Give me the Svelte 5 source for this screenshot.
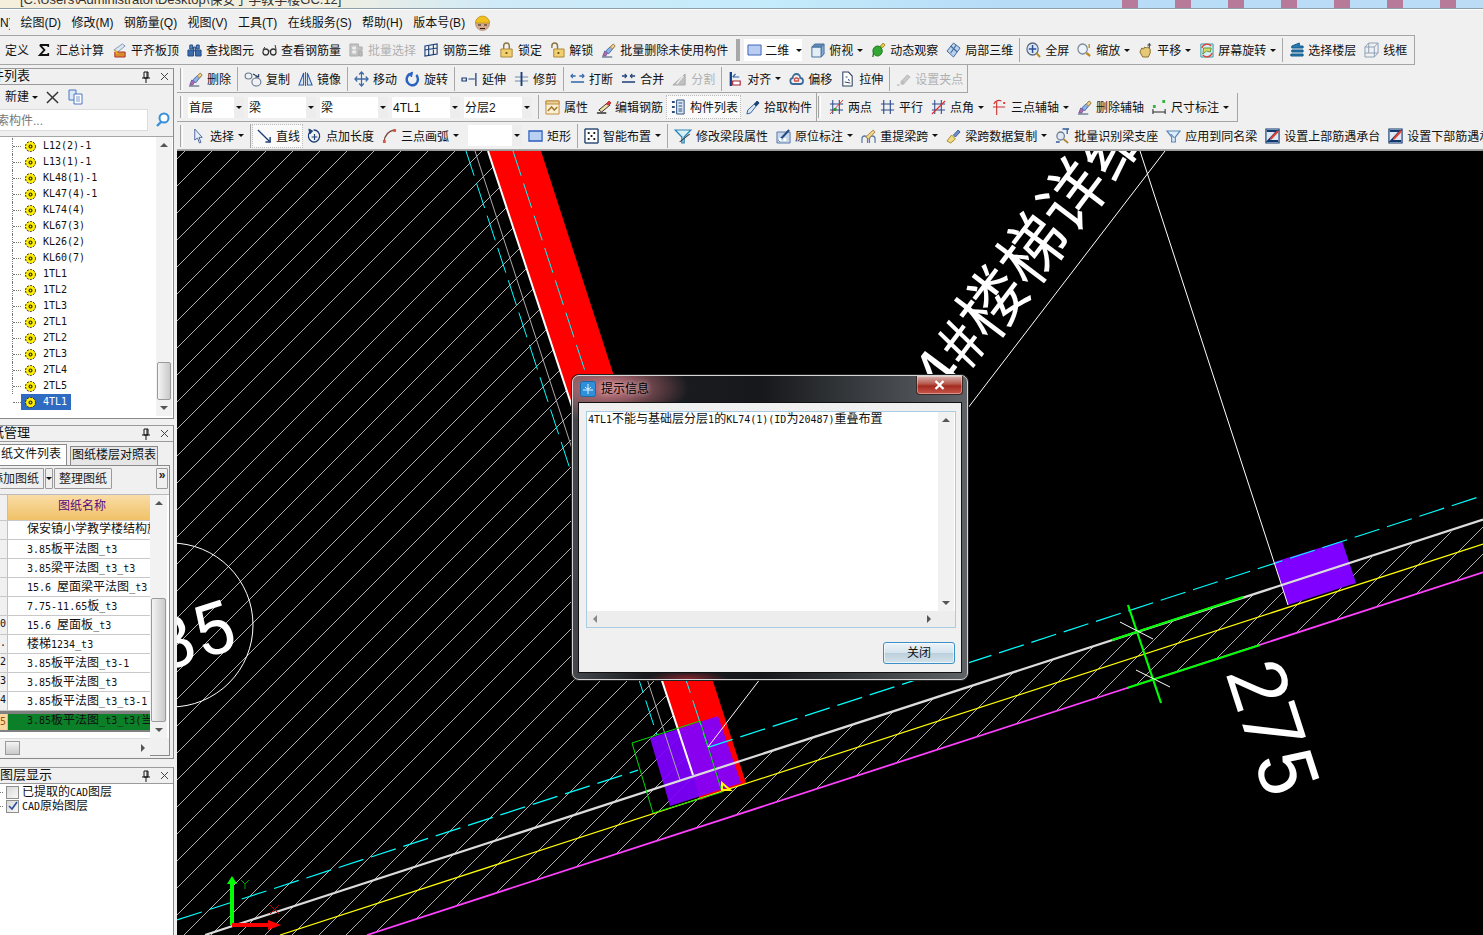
<script>
  const c = (x, y, r) => `M${x - r} ${y}a${r} ${r} 0 1 0 ${2 * r} 0a${r} ${r} 0 1 0 ${-2 * r} 0z`;

  // each icon is a list of [path, stroke, fill, stroke width]
  const icons = {
    sum: [['M3 3h9v2M3 3l5 5-5 5h9v-2', '#111', 'none', 1.8]],
    plate: [['M2 8l9-6 3 2-8 6z', '#7e98b8', '#dfe7f0'], ['M3 10h11v5H3z', '#a33', '#d98a2b'], ['M3 8l3 4', '#e8b020', 'none', 2]],
    binoc: [['M3 3h3v4H3zM10 3h3v4h-3z', '#234a80', '#5b84c4'], ['M1 8h6v6H1zM9 8h6v6H9z', '#234a80', '#3c6bad'], ['M7 5h2v4H7z', '#234a80', '#9db8dc']],
    glasses: [[c(4, 10, 3), '#333', 'none', 1.3], [c(12, 10, 3), '#333', 'none', 1.3], ['M7 9h2M1 8l2-3M15 8l-1-5', '#333', 'none', 1]],
    batchsel: [['M1 2h9v3h4v3h-4v6H1z', '#aaa', '#c4c4c4'], ['M4 5h3v2H4zM4 9h3v2H4z', '#eee', '#eee'], ['M11 9h3v5h-3z', '#aaa', '#bbb']],
    rebar3d: [['M1 4l13-2v10L1 14zM5 3v11M10 3v10M1 8l13-2', '#1c3f78', 'none', 1.2]],
    lock: [['M5 7V4a3 3 0 0 1 6 0v3', '#8a7540', 'none', 1.5], ['M2 7h12v8H2z', '#a9873a', '#f2cf6e'], ['M8 10v2', '#6b5520', 'none', 2]],
    unlock: [['M2 6V4a3 3 0 0 1 6 0v3', '#8a7540', 'none', 1.5], ['M4 7h11v8H4z', '#a9873a', '#f2cf6e'], ['M9 10v2', '#6b5520', 'none', 2]],
    erase: [['M1 15h11', '#344a6a', 'none', 1], ['M2 14l2-5 3 2-2 3z', '#7a5a9a', '#b06cb0'], ['M5 9l8-7 2 2-7 8z', '#4a70b0', '#8fb0e0'], ['M10 5l3-3 2 2-3 3z', '#b08a40', '#f0d48a']],
    rect2d: [['M1 3h14v10H1z', '#3a62b8', '#b9cdf2']],
    cube: [['M2 5h10v10H2z', '#45709c', '#e2edf6'], ['M2 5l3-3h10l-3 3z', '#45709c', '#5e8cb8'], ['M12 5l3-3v10l-3 3z', '#45709c', '#86acd0']],
    orbit: [['M2 15c0-5 4-9 10-11', '#1d6b1d', 'none', 1.4], [c(7, 9, 5), '#1c7a1c', '#34a634'], ['M10 4l3-3 2 2-3 3z', '#9a8a20', '#e3cf4a']],
    part3d: [['M8 1l7 5-7 9-7-6z', '#3d6aa0', '#bcd2ea'], ['M5 4l7 6M11 3L5 11', '#3d6aa0', 'none', 1.2]],
    full: [[c(7, 7, 6), '#5a6a80', '#dfe9f5', 1.3], ['M7 3v8M3 7h8', '#2b4f98', 'none', 1.6], ['M11 11l4 4', '#b88a20', 'none', 2]],
    zoom: [[c(6, 7, 5), '#7a8a9a', '#eef3f8', 1.3], ['M10 11l4 3', '#b88a20', 'none', 2.2], ['M13 2v4', '#b88a20', 'none', 1.4]],
    pan: [['M2 10l2-4 2 1 1-2 2 1 1-1 3 2v4l-2 4H5z', '#8a7030', '#e5c878'], ['M12 1v5M10 3h4', '#333', 'none', 1]],
    screen: [['M2 2h13v13H2z', '#39a', '#d6eef7'], ['M4 12l4-3 4 1 1-4H5z', '#5a9a3a', '#e2d66a'], ['M3 6a6 6 0 0 1 10-2M14 11a6 6 0 0 1-10 2', '#d43', 'none', 1.4]],
    floor: [['M3 4l8-3v3h4v2H3zM3 8h12v2H3zM2 12h13v2H2z', '#0e5a8a', '#2a7ab0']],
    wire: [['M1 5h10v10H1zM1 5l4-4h10v10l-4 4M11 5l4-4M5 1v10H1M5 11h10', '#8aa0b8', 'none', 1]],
    copy: [[c(4, 5, 3), '#6a7a8a', '#eef2f6'], [c(11, 11, 4), '#6a7a8a', '#eef2f6'], ['M8 3l5 3M13 3v3h-3', '#2a3a60', 'none', 1]],
    mirror: [['M6 2v12H1zM10 2v12h5z', '#2c5fa8', '#d8e6f6', 1.1], ['M8 1v14', '#2c5fa8', 'none', 1]],
    move: [['M8 1v14M1 8h14M5.5 3.5L8 1l2.5 2.5M5.5 12.5L8 15l2.5-2.5M3.5 5.5L1 8l2.5 2.5M12.5 5.5L15 8l-2.5 2.5', '#3c6aa6', 'none', 1.3]],
    rotate: [['M5 3a6 6 0 1 0 7 1', '#2a62c0', 'none', 2.6], ['M8 1L4 3l3 3z', '#2a62c0', '#2a62c0']],
    extend: [['M1 7h4v3H1zM14 2v13M7 8h6', '#1c3f78', 'none', 1.2]],
    trim: [['M1 6h14M1 10h14', '#7088a8', 'none', 1.1], ['M8 1v14', '#1c3f78', 'none', 2]],
    brk: [['M1 5h5M10 5h5M1 11h14', '#2e66a8', 'none', 1.4], ['M3 3L1 5l2 2M13 3l2 2-2 2', '#2e66a8', 'none', 1.1]],
    merge: [['M1 5h5M10 5h5M1 11h14', '#1c3f78', 'none', 1.4], ['M4 3l2 2-2 2M12 3l-2 2 2 2', '#1c3f78', 'none', 1.1]],
    split: [['M1 14L14 3v11z', '#aaa', '#c0c0c0'], ['M5 13l7-8', '#eee', 'none', 1.4]],
    align: [['M3 1v14', '#123a80', 'none', 2.4], ['M5 6h7M5 6l3-3', '#2a5ea8', 'none', 1.2], ['M5 10h8v4H5z', '#a02030', '#fff', 1.2]],
    offset: [['M5 13a3 3 0 0 1-1-6 4 4 0 0 1 8 0 3 3 0 0 1 0 6z', '#3a6a9a', 'none', 1.8], ['M6 10a2 2 0 0 1 0-2 2.5 2.5 0 0 1 4 0 2 2 0 0 1 0 2z', '#d0504a', 'none', 1.4]],
    stretch: [['M3 1h6l4 4v10H3z', '#2a3f60', '#fff', 1.1], ['M6 6h2M9 8l1 2M5 11l6 1', '#2a3f60', 'none', 1]],
    grip: [['M1 14h3', '#aaa', 'none', 1], ['M6 10l6-6 3 2-6 6z', '#b8b8b8', '#c8c8c8'], ['M5 12l1-2 3 2-2 2z', '#bbb', '#bbb']],
    prop: [['M1 2h14v13H1z', '#c08a30', '#faf0d8'], ['M1 2h14v3H1z', '#c08a30', '#e8d0a0'], ['M3 12l4-4 3 3 3-3', '#a27a2a', 'none', 1.6]],
    edit: [['M1 14h10', '#222', 'none', 1.4], ['M3 11l9-7 3 2-9 7z', '#333', '#f0e0a8', 1], ['M11 5l3-3 2 2-3 2z', '#b33', '#d34']],
    list: [['M1 2h3v2H1zM1 7h3v2H1zM1 12h3v2H1z', 'none', '#2b4f7c'], ['M6 1h8v14H6z', '#2b4f7c', '#dbe6f4', 1], ['M8 4h4M8 7h4M8 10h4M8 12h4', '#2b4f7c', 'none', 1]],
    pick: [['M2 15l1-4 7-6 2 2-6 7z', '#3b5f92', '#dbe8f8'], ['M10 5l3-3 2 2-3 3z', '#1c3f78', '#1c3f78']],
    two: [['M4 1v14M11 1v14M1 5h14M1 11h14', '#2a4a8a', 'none', 1.1], ['M1 15L15 1', '#d33', 'none', 1], ['M5 9h3v3H5z', 'none', '#2e9a2e']],
    par: [['M4 1v14M11 1v14M1 5h14M1 11h14', '#2a4a8a', 'none', 1.2]],
    ang: [['M4 1v14M11 1v14M1 5h14M1 11h14', '#2a4a8a', 'none', 1.1], ['M1 15L15 2', '#d33', 'none', 1.3]],
    three: [['M5 3v13M1 8h13', '#c33', 'none', 1.2], ['M2 5a6 6 0 0 1 8-3', '#c33', 'none', 1.2], ['M12 3h2v2h-2z', 'none', '#e33']],
    dim: [['M1 10v5M14 10v5M1 13h13', '#222', 'none', 1], ['M1 6h3v3H1zM11 1h3v3h-3z', 'none', '#3ab53a']],
    cursor: [['M4 1v11l3-2 2 5 1.6-.6-2-5h3.4z', '#4a68a0', '#e8eef8', 1]],
    line: [['M1 2l13 12', '#1c3f78', 'none', 1.5], ['M14 9v5H9', '#1c3f78', 'none', 1.5]],
    plen: [['M3 4a6 6 0 1 0 4-2', '#1c3f78', 'none', 1.4], ['M2 1l4 2-3 3z', '#1c3f78', '#1c3f78'], ['M8 6v6M5 9h6', '#1c3f78', 'none', 1.2]],
    arc: [['M2 14C3 7 7 3 13 2', '#7a4a3a', 'none', 1.3], ['M1 12h3v3H1zM12 1h3v3h-3z', 'none', '#d8584a']],
    rect: [['M1 3h14v10H1z', '#2a5cc0', '#b9d0f4', 1.3]],
    smart: [['M1 1h14v14H1z', '#333', '#fff', 1], ['M4 4h2v2H4zM10 4h2v2h-2zM7 7h2v2H7zM4 10h2v2H4zM10 10h2v2h-2z', 'none', '#222'], ['M1 1h14v14H1z', '#2a5a9a', 'none', 1]],
    filter: [['M1 2h14L9 9v6H7V9z', '#2a86b8', '#d8f0f8', 1.2], ['M5 14l9-8', '#333', 'none', 1]],
    inplace: [['M1 4h14v11H1z', '#5878a8', '#c8d8ec'], ['M3 13l9-9 2-2', '#274a80', 'none', 2.2], ['M3 10h3v3H3zM8 10h3v3H8z', 'none', '#fff']],
    respan: [['M1 15v-4a3 3 0 0 1 6 0v4M9 15v-4a3 3 0 0 1 6 0v4', '#5a7aa8', 'none', 1.3], ['M5 9l8-7 2 2-7 7z', '#a88a4a', '#f0d48a']],
    broom: [['M1 13l5-6 4 4-5 4z', '#a88a30', '#f0dc80'], ['M8 7l5-5 2 2-5 5z', '#3a5a90', '#7090c8']],
    batch: [[c(6, 8, 4), '#6a7a90', '#dfe8f2', 1.3], ['M9 11l5 4', '#b08a30', 'none', 2], ['M8 1h7M13 1v5M1 14h4', '#2a5a9a', 'none', 1.3]],
    same: [['M1 3h14L10 9v5H6V9z', '#5a86b8', '#dcecf8', 1.2], ['M5 6l4 4', '#2a5a9a', 'none', 1]],
    seat: [['M1 1h14v14H1z', '#12386e', '#dfe9f6', 1.2], ['M2 3h11L3 13h11', '#12386e', 'none', 1.8], ['M6 11l8-8', '#e04030', 'none', 2.2]]
  };

  const it = (t, i, o = {}) => ({ t, i, ...o });
  const sep = { sep: true };

  const row1 = [
    it('定义'), it('汇总计算', 'sum'), it('平齐板顶', 'plate'), it('查找图元', 'binoc'), it('查看钢筋量', 'glasses'),
    it('批量选择', 'batchsel', { off: true }), it('钢筋三维', 'rebar3d'), it('锁定', 'lock'), it('解锁', 'unlock'),
    it('批量删除未使用构件', 'erase'), { sep: true, grip: true },
    { combo2d: true }, it('俯视', 'cube', { arrow: true }), it('动态观察', 'orbit'), it('局部三维', 'part3d'), sep,
    it('全屏', 'full'), it('缩放', 'zoom', { arrow: true }), it('平移', 'pan', { arrow: true }), it('屏幕旋转', 'screen', { arrow: true }), sep,
    it('选择楼层', 'floor'), it('线框', 'wire')
  ];
  const row2 = [
    it('删除', 'erase'), sep, it('复制', 'copy', { w: 18 }), it('镜像', 'mirror'), sep, it('移动', 'move'), it('旋转', 'rotate'), sep,
    it('延伸', 'extend', { w: 17 }), it('修剪', 'trim'), sep, it('打断', 'brk'), it('合并', 'merge'), it('分割', 'split', { off: true }), sep,
    it('对齐', 'align', { arrow: true }), it('偏移', 'offset'), it('拉伸', 'stretch'), sep, it('设置夹点', 'grip', { off: true })
  ];
  const combos = [['首层', 46], ['梁', 58], ['梁', 58], ['4TL1', 58], ['分层2', 58]];
  const row3a = [it('属性', 'prop'), it('编辑钢筋', 'edit'), it('构件列表', 'list', { on: true }), it('拾取构件', 'pick')];
  const row3b = [
    it('两点', 'two'), it('平行', 'par'), it('点角', 'ang', { arrow: true }), it('三点辅轴', 'three', { arrow: true }),
    it('删除辅轴', 'erase'), it('尺寸标注', 'dim', { arrow: true })
  ];
  const row4a = [it('选择', 'cursor', { arrow: true }), sep, it('直线', 'line', { on: true }), it('点加长度', 'plen'), it('三点画弧', 'arc', { arrow: true })];
  const row4b = [
    it('矩形', 'rect'), sep, it('智能布置', 'smart', { arrow: true }), sep, it('修改梁段属性', 'filter', { w: 18 }),
    it('原位标注', 'inplace', { arrow: true }), it('重提梁跨', 'respan', { arrow: true }), it('梁跨数据复制', 'broom', { arrow: true }),
    it('批量识别梁支座', 'batch'), it('应用到同名梁', 'same'), it('设置上部筋遇承台', 'seat'), it('设置下部筋遇承台', 'seat')
  ];

  const menus = ['绘图(D)', '修改(M)', '钢筋量(Q)', '视图(V)', '工具(T)', '在线服务(S)', '帮助(H)', '版本号(B)'];
  const tree = ['L12(2)-1', 'L13(1)-1', 'KL48(1)-1', 'KL47(4)-1', 'KL74(4)', 'KL67(3)', 'KL26(2)', 'KL60(7)',
    '1TL1', '1TL2', '1TL3', '2TL1', '2TL2', '2TL3', '2TL4', '2TL5', '4TL1'];
  const drawings = [
    ['', '保安镇小学教学楼结构施工图'], ['', '3.85板平法图_t3'], ['', '3.85梁平法图_t3_t3'], ['', '15.6 屋面梁平法图_t3'],
    ['', '7.75-11.65板_t3'], ['0', '15.6 屋面板_t3'], ['.', '楼梯1234_t3'], ['2', '3.85板平法图_t3-1'],
    ['3', '3.85板平法图_t3'], ['4', '3.85板平法图_t3_t3-1'], ['5', '3.85板平法图_t3_t3(当前)']
  ];

  const runs = (s) => s.split(/([\x00-\x7f]+)/).filter(Boolean).map((p) => ({ s: p, lat: /^[\x00-\x7f]/.test(p) }));

  // hatch lines of the floor slab, x + y stays constant along one line
  const hatch = [];
  for (let k = 330 + 6; k < 2500; k += 27) hatch.push(k);

  const beamY = (x, x0, y0) => y0 - 0.325 * (x - x0);
</script>

{#snippet mix(s)}{#each runs(s) as r}<span class:lat={r.lat}>{r.s}</span>{/each}{/snippet}

{#snippet icon(name, w = 15)}
  <svg class="ic" width={w} height="16" viewBox="0 0 16 16" preserveAspectRatio="none">
    {#each icons[name] as p}
      <path d={p[0]} stroke={p[1]} fill={p[2]} stroke-width={p[3] ?? 1} />
    {/each}
  </svg>
{/snippet}

{#snippet gear()}
  <svg class="gear" width="13" height="13" viewBox="0 0 13 13">
    <circle cx="6.5" cy="6.5" r="5" fill="#ffee00" stroke="#222" stroke-width="1" stroke-dasharray="2 1.2" />
    <circle cx="6.5" cy="6.5" r="2" fill="#222" />
    <circle cx="6.5" cy="6.5" r="0.9" fill="#ffee00" />
  </svg>
{/snippet}

{#snippet tools(items)}
  {#each items as x}
    {#if x.combo2d}
      <span class="combo2d">{@render icon('rect2d')}<b>二维</b><i class="arr"></i></span>
    {:else if x.sep}
      <span class="sep" class:grip={x.grip}></span>
    {:else}
      <span class="ti" class:off={x.off} class:on={x.on}>
        {#if x.i}{@render icon(x.i, x.w)}{/if}
        <span class="lbl">{x.t}</span>
        {#if x.arrow}<i class="arr"></i>{/if}
      </span>
    {/if}
  {/each}
{/snippet}

{#snippet vbar(cls, h)}
  <div class="vbar {cls}">
    <i class="tri up"></i>
    <div class="track"><div class="thumb" style="height:{h}px"></div></div>
    <i class="tri down"></i>
  </div>
{/snippet}

{#snippet phead(title, indent)}
  <div class="phead">
    <span class="ptitle" style="margin-left:{indent}px">{title}</span>
    <svg width="10" height="12" viewBox="0 0 10 12" class="pin"><path d="M3 1h4v6H3zM1 7h8M5 7v5M6 1v6" stroke="#111" fill="none" /></svg>
    <svg width="9" height="9" viewBox="0 0 9 9" class="cls"><path d="M1 1l7 7M8 1L1 8" stroke="#444" fill="none" /></svg>
  </div>
{/snippet}

<div class="app">
  <div class="titlebar"><span>[C:\Users\Administrator\Desktop\保安子学教学楼GC.12]</span></div>

  <div class="menubar">
    <span class="cutoff">N)</span>
    {#each menus as m}<span>{m}</span>{/each}
    <svg class="helmet" width="17" height="17" viewBox="0 0 17 17">
      <path d={c(8.5, 9.5, 7)} fill="#d8a888" stroke="#8a6a50" stroke-width=".5" />
      <path d="M1.5 9a7 7 0 0 1 14 0z" fill="#f0c020" stroke="#b08a10" stroke-width=".6" />
      <path d="M4 11h3M10 11h3M6 14.500h5" stroke="#222" fill="none" />
    </svg>
  </div>

  <div class="bar1">{@render tools(row1)}</div>

  <div class="main">
    <aside class="left">
      <section class="pane p1">
        {@render phead('件列表', -9)}
        <div class="ptools">
          <span class="newbtn">新建</span><i class="arr"></i>
          <svg width="13" height="13" viewBox="0 0 14 14" class="xbtn"><path d="M1 1l12 12M13 1L1 13" stroke="#333" stroke-width="1.6" fill="none" /></svg>
          <svg width="16" height="16" viewBox="0 0 16 16"><path d="M1 1h7v10H1z" fill="#dbe8f8" stroke="#4a78c0" /><path d="M6 5h8v10H6z" fill="#fff" stroke="#4a78c0" /><path d="M8 8h4M8 10h4M8 12h4" stroke="#7a9ad0" fill="none" /></svg>
        </div>
        <div class="search">
          <span class="ph">索构件...</span>
          <svg width="16" height="16" viewBox="0 0 16 16"><path d={c(9, 6, 4.5)} fill="#fff" stroke="#3a90d8" stroke-width="2" /><path d="M6 10l-4 4" stroke="#3a90d8" stroke-width="2.4" /></svg>
        </div>
        <div class="treewrap">
          <div class="tree">
            {#each tree as n, i}
              <div class="node" class:last={i === tree.length - 1}>
                <span class="hook"></span>
                <span class="nlabel" class:sel={n === '4TL1'}>{@render gear()}<span class="lat">{n}</span></span>
              </div>
            {/each}
          </div>
          {@render vbar('tbar', 38)}
        </div>
      </section>

      <section class="pane p2">
        {@render phead('纸管理', -9)}
        <div class="tabs">
          <span class="tab act">纸文件列表</span>
          <span class="tab">图纸楼层对照表</span>
        </div>
        <div class="frame">
          <div class="dtools">
            <span class="bt first">添加图纸</span><span class="bt mini"><i class="arr"></i></span>
            <span class="bt">整理图纸</span>
            <span class="bt more">»</span>
          </div>
          <div class="grid">
            <div class="gcol">
              <div class="grow ghead"><span class="num"></span><span class="gname">图纸名称</span></div>
              {#each drawings as d, i}
                <div class="grow" class:cur={i === drawings.length - 1} class:firstrow={i === 0}>
                  <span class="num">{d[0]}</span>
                  <span class="name">{@render mix(d[1])}</span>
                </div>
              {/each}
            </div>
            {@render vbar('gbar', 124)}
          </div>
          <div class="hbar"><span class="hthumb"></span><i class="tri right"></i></div>
        </div>
      </section>

      <section class="pane p3">
        {@render phead('图层显示', 0)}
        <div class="layers">
          <label><u></u><i class="chk"></i><span>{@render mix('已提取的CAD图层')}</span></label>
          <label><u></u><i class="chk on"><svg width="10" height="10" viewBox="0 0 10 10"><path d="M1 5l3 3 5-7" stroke="#2a4f9a" stroke-width="1.6" fill="none" /></svg></i><span>{@render mix('CAD原始图层')}</span></label>
        </div>
      </section>
    </aside>

    <div class="work">
      <div class="bar2">
        <span class="gripper"></span>
        {@render tools(row2)}
      </div>
      <div class="bar3">
        <div class="seg seg-a">
          <span class="gripper"></span>
          {#each combos as cb}
            <span class="combo"><b style="width:{cb[1]}px">{cb[0]}</b><em><i class="arr"></i></em></span>
          {/each}
          <span class="sep"></span>
          {@render tools(row3a)}
        </div>
        <div class="seg seg-b">
          <span class="gripper"></span>
          {@render tools(row3b)}
        </div>
      </div>
      <div class="bar4">
        <span class="gripper"></span>
        {@render tools(row4a)}
        <span class="combo small"><b style="width:44px"></b><em><i class="arr"></i></em></span>
        {@render tools(row4b)}
      </div>

      <svg class="cad" viewBox="177 151 1306 784" width="1306" height="784">
        <defs>
          <clipPath id="slab">
            <path d="M177 151H488L693 775L1483 521.5V571.5L367 935H177z" />
          </clipPath>
        </defs>
        <rect x="177" y="151" width="1306" height="784" fill="#000" />

        <g clip-path="url(#slab)" stroke="#b0b0b0" stroke-width="1">
          {#each hatch as k}
            <line x1="177" y1={k - 177} x2="1483" y2={k - 1483} />
          {/each}
        </g>

        <!-- beam running up the sheet -->
        <path d="M488 151H541L746 783L700 800L693 775z" fill="#fe0000" />
        <path d="M650 738L718 716L741 783L670 806z" fill="#7f00ff" opacity=".93" />
        <path d="M1274 562L1342 541L1356 583L1288 605z" fill="#7f00ff" />

        <path d="M488 151L693 775" stroke="#fff" stroke-width="2" />
        <path d="M475 151L680 780" stroke="#aaa" stroke-width="1" />
        <path d="M466 151L657 735" stroke="#0ff" stroke-width="1" stroke-dasharray="26 8" />
        <path d="M513 151L708 747" stroke="#0ff" stroke-width="1" stroke-dasharray="26 8" />

        <!-- long beam -->
        <line x1="177" y1={beamY(177, 177, 920)} x2="638" y2={beamY(638, 177, 920)} stroke="#0ff" stroke-width="1.2" stroke-dasharray="26 8" />
        <line x1="708" y1={beamY(708, 177, 920)} x2="1483" y2={beamY(1483, 177, 920)} stroke="#0ff" stroke-width="1.2" stroke-dasharray="26 8" />
        <line x1="205" y1="935" x2="1483" y2={beamY(1483, 205, 935)} stroke="#dcdcdc" stroke-width="2.2" />
        <line x1="280" y1="935" x2="1483" y2={beamY(1483, 280, 935)} stroke="#ffff00" stroke-width="1.2" />
        <line x1="367" y1="935" x2="1483" y2={beamY(1483, 367, 935)} stroke="#ff40ff" stroke-width="1.8" />

        <path d="M632 743L700 721L722 792L653 813z" fill="none" stroke="#00e000" stroke-width="1" />
        <path d="M722 783L730 790H722z" fill="none" stroke="#ffff00" stroke-width="2" />

        <path d="M708 747L1165 151" stroke="#fff" stroke-width="1" />
        <path d="M1140 151L1288 605" stroke="#fff" stroke-width="1" />

        <path d="M1112 640L1243 597M1127 688L1260 645M1128 605L1161 703" stroke="#00ff00" stroke-width="2.2" fill="none" />
        <path d="M1120 622L1153 639M1136 670L1170 687" stroke="#fff" stroke-width="1" fill="none" />

        <circle cx="171" cy="625" r="82" fill="none" stroke="#fff" stroke-width="1" />

        <text class="cadtxt" transform="translate(994 301) rotate(-53)" x="-110" y="24" font-size="67">4#楼梯详细</text>
        <text class="cadnum" transform="translate(1225 672) rotate(72)" font-size="80">275</text>
        <text class="cadnum" transform="translate(163 672) rotate(-18)" font-size="72">35</text>

        <!-- axis marker -->
        <path d="M230 925V884H227L232 876L237 884H234V925z" fill="#00ff00" />
        <path d="M232 923H268V920L281 925L268 930V927H232z" fill="#fe0000" />
        <path d="M241 880l4 4 4-4M245 884v5" stroke="#00a000" fill="none" />
        <path d="M270 905l9 9M279 905l-9 9" stroke="#c00000" fill="none" />
      </svg>
    </div>
  </div>

  <div class="dialog">
    <div class="dtitle">
      <svg width="16" height="16" viewBox="0 0 16 16">
        <rect x=".5" y=".5" width="15" height="15" rx="2" fill="#2f8fd8" stroke="#1a6aa8" />
        <path d="M8 3v10M3 9h10M5 6a3.5 3.5 0 0 0 6 0" stroke="#dff2ff" fill="none" />
      </svg>
      <span>提示信息</span>
      <span class="dclose">
        <svg width="11" height="10" viewBox="0 0 11 10"><path d="M1.5 1l8 8M9.5 1l-8 8" stroke="#fff" stroke-width="2.4" /></svg>
      </span>
    </div>
    <div class="client">
      <div class="box">
        <div class="boxmain">
          <p>{@render mix('4TL1不能与基础层分层1的KL74(1)(ID为20487)重叠布置')}</p>
          <div class="vbar msg"><i class="tri up"></i><div class="track"></div><i class="tri down"></i></div>
        </div>
        <div class="boxh"><i class="tri left"></i><i class="tri right"></i></div>
      </div>
      <div class="actions"><button type="button">关闭</button></div>
    </div>
  </div>
</div>

<style>
  :global(body) {
    margin: 0;
    background: #f0f0f0;
  }

  .app {
    position: relative;
    width: 1483px;
    height: 935px;
    overflow: hidden;
    background: #f0f0f0;
    color: #111;
    font: 12px/16px "Liberation Sans", "Noto Sans CJK SC", sans-serif;
  }

  .lat {
    font-family: "DejaVu Sans Mono", monospace;
    font-size: 10px;
  }

  /* title strip, mostly cut off by the screen edge */
  .titlebar {
    height: 8px;
    overflow: hidden;
    border-bottom: 1px solid #8fa0ad;
    background:
      repeating-linear-gradient(90deg, #b77a98 0 16px, transparent 16px 53px) 1122px 0 / 361px 100% no-repeat,
      linear-gradient(90deg, #f4eedc 0, #f2efe0 320px, #cfeaf8 500px, #c5ecfb 760px, #b7dcf8 1000px, #bcdcf6 100%);
    font-size: 13px;
    line-height: 8px;
    padding-left: 20px;
    box-sizing: content-box;
    color: #333;
  }

  .titlebar span {
    position: relative;
    top: -4px;
  }

  .menubar {
    height: 26px;
    display: flex;
    align-items: center;
    gap: 10.4px;
    border-top: 1px solid #fff;
    box-sizing: border-box;
  }

  .cutoff {
    width: 10px;
    overflow: hidden;
  }

  .helmet {
    margin-left: -2px;
  }

  .bar1 {
    height: 30px;
    width: 1415px;
    box-sizing: border-box;
    display: flex;
    align-items: center;
    border-top: 1px solid #a5a5a5;
    border-bottom: 1px solid #a5a5a5;
    border-right: 1px solid #a5a5a5;
  }

  .bar1 > .ti:first-child {
    margin-left: 5px;
  }

  .main {
    display: flex;
    height: 870px;
  }

  /* left docked panes */
  .left {
    width: 174px;
    margin-right: 3px;
    flex: none;
    display: flex;
    flex-direction: column;
  }

  .pane {
    overflow: hidden;
    border-right: 1px solid #8a8a8a;
  }

  .p1 {
    margin-top: 3px;
    height: 350px;
    border-bottom: 1px solid #8a8a8a;
  }

  .p2 {
    margin-top: 6px;
    height: 333px;
    border-bottom: 1px solid #8a8a8a;
  }

  .p3 {
    margin-top: 8px;
    flex: 1;
    background: #fff;
  }

  .phead {
    height: 15px;
    display: flex;
    align-items: center;
    border: 1px solid #9a9a9a;
    border-left: 0;
    border-right: 0;
    background: #f0f0f0;
    font-size: 13px;
    overflow: hidden;
  }

  .ptitle {
    flex: 1;
    padding-bottom: 2px;
    white-space: nowrap;
  }

  .pin {
    margin-right: 9px;
  }

  .cls {
    margin-right: 4px;
  }

  .ptools {
    height: 24px;
    display: flex;
    align-items: center;
    padding-left: 5px;
    box-sizing: border-box;
  }

  .newbtn {
    margin-right: 2px;
  }

  .xbtn {
    margin: 0 9px 0 8px;
  }

  .search {
    height: 27px;
    display: flex;
    align-items: flex-start;
    gap: 7px;
  }

  .search svg {
    margin-top: 3px;
  }

  .ph {
    width: 148px;
    height: 22px;
    line-height: 22px;
    background: #fff;
    color: #777;
    text-indent: -3px;
    overflow: hidden;
    border: 1px solid #dcdcdc;
    border-left: 0;
    box-sizing: border-box;
  }

  .treewrap {
    height: 281px;
    display: flex;
    background: #fff;
    border-top: 1px solid #a5a5a5;
  }

  .tree {
    flex: 1;
    overflow: hidden;
    margin-top: 1px;
    height: 272px;
  }

  .node {
    height: 16px;
    margin-left: 12px;
    display: flex;
    align-items: center;
    border-left: 1px dotted #777;
  }

  .node.last {
    border-left-color: transparent;
  }

  .hook {
    width: 8px;
    height: 0;
    border-top: 1px dotted #777;
    flex: none;
  }

  .nlabel {
    display: flex;
    align-items: center;
    gap: 6px;
    height: 16px;
    padding: 0 2px 0 3px;
    flex: none;
  }

  .nlabel.sel {
    background: #2f6bc1;
    color: #fff;
    padding-right: 4px;
  }

  .gear {
    flex: none;
  }

  .vbar {
    width: 16px;
    display: flex;
    flex-direction: column;
    align-items: center;
    background: #f2f2f2;
    flex: none;
  }

  .tbar {
    height: 279px;
    margin-right: 1px;
  }

  .track {
    flex: 1;
    width: 100%;
    display: flex;
    flex-direction: column;
    justify-content: flex-end;
  }

  .thumb {
    background: linear-gradient(90deg, #f4f4f4, #c9c9c9);
    border: 1px solid #9a9a9a;
    border-radius: 2px;
    box-sizing: border-box;
    margin: 0 1px;
  }

  .tri {
    display: block;
    width: 0;
    height: 0;
    margin: 6px 0;
    border: 4px solid transparent;
    flex: none;
  }

  .tri.up {
    border-bottom-color: #555;
    border-top-width: 0;
  }

  .tri.down {
    border-top-color: #555;
    border-bottom-width: 0;
  }

  .tri.right {
    border-left-color: #555;
    border-right-width: 0;
    margin: 0;
  }

  .tri.left {
    border-right-color: #888;
    border-left-width: 0;
    margin: 0;
  }

  .tabs {
    height: 23px;
    display: flex;
    align-items: flex-end;
    gap: 3px;
    box-sizing: border-box;
  }

  .tab {
    height: 19px;
    line-height: 17px;
    padding: 0 1px;
    background: #e6e6e6;
    border: 1px solid #8a8a8a;
    border-bottom: 0;
    box-sizing: border-box;
    width: 88px;
    text-align: center;
    overflow: hidden;
    white-space: nowrap;
  }

  .tab.act {
    width: 67px;
    height: 21px;
    line-height: 18px;
    background: #fff;
    border-left: 0;
    text-align: left;
  }

  .frame {
    border: 1px solid #8a8a8a;
    border-left: 0;
    margin-right: 3px;
    height: 291px;
    box-sizing: border-box;
  }

  .dtools {
    height: 28px;
    display: flex;
    align-items: flex-start;
    padding-top: 2px;
    box-sizing: border-box;
    gap: 1px;
  }

  .bt {
    height: 21px;
    line-height: 20px;
    padding: 0 4px;
    background: #efefef;
    border: 1px solid #9a9a9a;
    border-radius: 1px;
    box-sizing: border-box;
    color: #222;
  }

  .bt.first {
    width: 44px;
    padding: 0 4px 0 0;
    border-left: 0;
    overflow: hidden;
    white-space: nowrap;
    direction: rtl;
  }

  .bt.mini {
    width: 8px;
    padding: 0;
    display: flex;
    align-items: center;
    justify-content: center;
  }

  .bt.more {
    width: 12px;
    padding: 0;
    margin-left: auto;
    margin-right: 1px;
    text-align: center;
    font-weight: bold;
    line-height: 12px;
  }

  .grid {
    display: flex;
    height: 243px;
    border-top: 1px solid #bbb;
    background: #fff;
  }

  .gcol {
    width: 150px;
    overflow: hidden;
  }

  .grow {
    display: flex;
    height: 19px;
    align-items: center;
    box-sizing: border-box;
    border-bottom: 1px solid #c8c8c8;
  }

  .grow.ghead {
    height: 26px;
  }

  .num {
    width: 8px;
    height: 100%;
    flex: none;
    background: #f0f0f0;
    border-right: 1px solid #c0c0c0;
    box-sizing: border-box;
    overflow: hidden;
    font-family: "DejaVu Sans Mono", monospace;
    font-size: 10px;
  }

  .gname {
    flex: 1;
    height: 100%;
    line-height: 23px;
    text-align: center;
    padding-left: 6px;
    color: #5a0a80;
    background: linear-gradient(#f9dca6, #f0c268);
  }

  .name {
    padding-left: 19px;
    white-space: nowrap;
    overflow: hidden;
    flex: 1;
  }

  .firstrow .name {
    padding-bottom: 2px;
  }

  .cur {
    border: 2px solid #808080;
    border-left: 0;
    height: 21px;
    border-width: 3px 0 2px 0;
  }

  .cur .name {
    background: #0b8028;
    height: 100%;
    line-height: 12px;
  }

  .cur .num {
    background: #f8d8a0;
    color: #a0520a;
  }

  .gbar {
    width: 17px;
    height: 243px;
  }

  .hbar {
    height: 18px;
    display: flex;
    align-items: center;
    background: #f2f2f2;
    padding-left: 5px;
    border-top: 1px solid #ddd;
    box-sizing: border-box;
    width: 150px;
  }

  .hthumb {
    width: 15px;
    height: 14px;
    background: linear-gradient(#f4f4f4, #c9c9c9);
    border: 1px solid #9a9a9a;
    box-sizing: border-box;
    margin-right: auto;
  }

  .hbar .tri.right {
    margin-right: 5px;
  }

  .layers {
    padding-top: 1px;
  }

  .layers label {
    display: flex;
    align-items: center;
    height: 14px;
    gap: 3px;
  }

  .layers u {
    width: 3px;
    border-top: 1px dotted #777;
    text-decoration: none;
  }

  .chk {
    width: 11px;
    height: 11px;
    border: 1px solid #8e8e8e;
    background: linear-gradient(135deg, #d8d8d8, #f8f8f8);
    display: flex;
    align-items: center;
    justify-content: center;
    flex: none;
  }

  /* tool strips */
  .work {
    flex: 1;
    min-width: 0;
    display: flex;
    flex-direction: column;
    overflow: hidden;
  }

  .bar2,
  .bar3,
  .bar4 {
    display: flex;
    align-items: center;
    white-space: nowrap;
  }

  .bar2 {
    height: 28px;
    width: 791px;
    box-sizing: border-box;
    border-bottom: 1px solid #a5a5a5;
    border-right: 1px solid #a5a5a5;
  }

  .bar3 {
    height: 29px;
  }

  .seg {
    display: flex;
    align-items: center;
    height: 100%;
    box-sizing: border-box;
    border-bottom: 1px solid #a5a5a5;
    border-right: 1px solid #a5a5a5;
  }

  .seg-a {
    width: 640px;
  }

  .seg-b {
    width: 421px;
  }

  .seg-b .gripper {
    margin-left: 1px;
  }

  .bar4 {
    height: 28px;
    border-bottom: 1px solid #a8a8a8;
    box-sizing: border-box;
  }

  .gripper {
    width: 1px;
    height: 22px;
    margin: 0 0 0 3px;
    border-left: 1px solid #a5a5a5;
    border-right: 1px solid #fff;
    flex: none;
  }

  .ti {
    display: inline-flex;
    align-items: center;
    gap: 4px;
    margin-left: 8px;
    height: 22px;
    flex: none;
  }

  .bar2 > .gripper + .ti {
    margin-left: 5px;
  }

  .lbl {
    padding-top: 2px;
  }

  .ti.off {
    color: #b0b0b0;
  }

  .ti.on {
    margin-left: 3px;
    padding: 0 2px 0 4px;
    background: #fafafa;
    border: 1px dotted #bbb;
    height: 24px;
    box-sizing: border-box;
  }

  .ti.on + .ti {
    margin-left: 4px;
  }

  .ic {
    flex: none;
    display: block;
  }

  .arr {
    display: inline-block;
    width: 0;
    height: 0;
    border: 3px solid transparent;
    border-top: 3px solid #111;
    border-bottom-width: 0;
    flex: none;
  }

  .newbtn + .arr {
    margin-left: 1px;
  }

  .sep {
    width: 1px;
    height: 24px;
    background: #a8a8a8;
    margin: 0 -2px 0 6px;
    flex: none;
  }

  .sep.grip {
    height: 22px;
    margin: 0 2px 0 8px;
    border-right: 1px solid #aaa;
    padding-right: 2px;
  }

  .combo2d {
    display: inline-flex;
    align-items: center;
    gap: 3px;
    width: 58px;
    height: 22px;
    background: #fff;
    margin-left: 2px;
    padding-left: 3px;
    box-sizing: border-box;
    flex: none;
  }

  .combo2d b {
    font-weight: normal;
    width: 29px;
    padding-top: 2px;
  }

  .combo {
    display: inline-flex;
    align-items: stretch;
    height: 21px;
    margin-left: 4px;
    flex: none;
  }

  .gripper + .combo {
    margin-left: 5px;
  }

  .combo b {
    font-weight: normal;
    background: #fff;
    padding-left: 1px;
    box-sizing: border-box;
    line-height: 23px;
    font-size: 12px;
  }

  .combo em {
    width: 10px;
    background: #ededed;
    display: flex;
    align-items: center;
    justify-content: center;
  }

  .combo.small {
    margin-left: 9px;
    margin-right: -2px;
  }

  .cad {
    display: block;
    flex: none;
    border-top: 1px solid #9a9a9a;
  }

  .cadtxt {
    fill: #fff;
    font-family: "Noto Sans CJK SC", sans-serif;
  }

  .cadnum {
    fill: #fff;
    font-family: Roboto, "Liberation Sans", sans-serif;
    font-weight: 400;
  }

  /* message box on top of the drawing */
  .dialog {
    position: absolute;
    left: 572px;
    top: 375px;
    width: 396px;
    height: 305px;
    box-sizing: border-box;
    padding: 0 5px 6px;
    display: flex;
    flex-direction: column;
    border: 1px solid #d6d6d6;
    border-radius: 7px;
    background:
      radial-gradient(ellipse 80px 34px at 36px 12px, rgba(214, 120, 130, 0.95), transparent),
      radial-gradient(ellipse 40px 8px at 115px 100%, rgba(160, 40, 50, 0.8), transparent),
      linear-gradient(90deg, #45494d, #1a1c20 18%, #16181b 48%, #5f6367 100%);
    box-shadow: 0 0 0 1px #222;
  }

  .dtitle {
    height: 26px;
    flex: none;
    display: flex;
    align-items: center;
    gap: 5px;
    padding-left: 2px;
    box-sizing: border-box;
    position: relative;
    color: #000;
  }

  .dtitle > span:not(.dclose) {
    text-shadow: 0 0 5px rgba(255, 255, 255, 0.75);
  }

  .dclose {
    position: absolute;
    top: 0;
    right: -1px;
    width: 47px;
    height: 19px;
    display: flex;
    align-items: center;
    justify-content: center;
    box-sizing: border-box;
    border: 1px solid #3a2a2a;
    border-top: 0;
    border-radius: 0 0 4px 4px;
    background: linear-gradient(#d9b4ae, #b4564a 45%, #a42a1e 55%, #c8584a);
    box-shadow: inset 0 0 0 1px rgba(255, 255, 255, 0.35);
  }

  .client {
    flex: 1;
    display: flex;
    flex-direction: column;
    background: #f0f0f0;
    border: 1px solid #111;
    padding: 8px 5px 8px 7px;
    box-sizing: border-box;
    min-height: 0;
  }

  .box {
    height: 217px;
    flex: none;
    background: #fff;
    border: 1px solid #a9cce0;
    display: flex;
    flex-direction: column;
    box-sizing: border-box;
  }

  .boxmain {
    flex: 1;
    display: flex;
    min-height: 0;
  }

  .boxmain p {
    flex: 1;
    margin: -1px 0 0;
    padding: 0 0 0 1px;
    color: #111;
  }

  .vbar.msg {
    width: 16px;
    margin-right: 1px;
    background: #f1f1f1;
  }

  .boxh {
    height: 16px;
    flex: none;
    display: flex;
    align-items: center;
    justify-content: space-between;
    padding: 0 24px 0 6px;
    background: #ededed;
  }

  .actions {
    display: flex;
    justify-content: flex-end;
    margin-top: 14px;
    padding-right: 1px;
  }

  .actions button {
    width: 72px;
    height: 22px;
    padding: 0;
    font: inherit;
    color: #111;
    background: linear-gradient(#edf3f7 0, #d6e4ee 48%, #bcd0dc 52%, #d4e2ea 100%);
    border: 1px solid #3a90c4;
    border-radius: 3px;
    box-shadow: inset 0 0 0 1px rgba(255, 255, 255, 0.6);
  }
</style>
